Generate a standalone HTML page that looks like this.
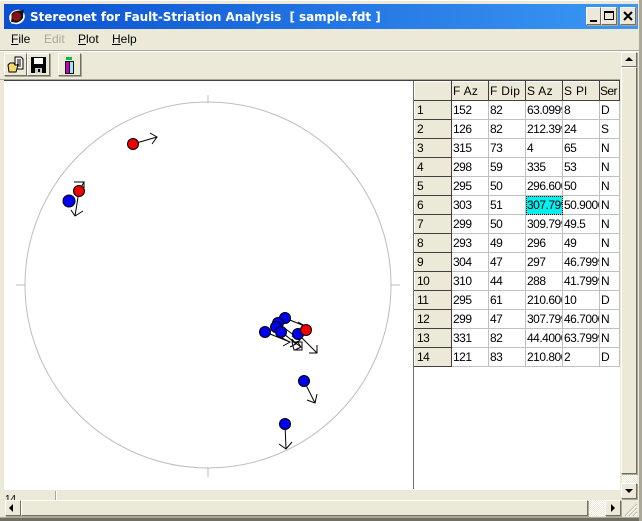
<!DOCTYPE html>
<html><head><meta charset="utf-8"><style>
html,body{margin:0;padding:0}
body{width:642px;height:521px;overflow:hidden;position:relative;background:#ece9d8;font-family:"Liberation Sans",sans-serif;font-size:12px;color:#000}
.a{position:absolute}
.btn{position:absolute;box-sizing:border-box;background:#ece9d8;border:1px solid;border-color:#fff #716f64 #716f64 #fff;box-shadow:1px 1px 0 #aca899}
.hatch{position:absolute;background:repeating-conic-gradient(#fff 0 25%,#ece9d8 0 50%) 0 0/2px 2px}
table{position:absolute;left:414px;top:81px;border-collapse:collapse;table-layout:fixed;width:205px;background:#fff}
td{box-sizing:border-box;height:19px;padding:0 0 0 1px;border:1px solid #c0c0c0;overflow:hidden;white-space:nowrap;font-size:12px;line-height:16px;letter-spacing:-.5px}
td.h{background:#ece9d8;border:1px solid;border-color:#fff #404040 #404040 #fff;padding-left:2px}
tr:first-child td{background:#ece9d8;border:1px solid;border-color:#fff #404040 #404040 #fff;letter-spacing:.3px}
tr:first-child td:last-child{letter-spacing:-.6px;padding-left:0}
td.s{background:#00f0f0;outline:1px dotted #000;outline-offset:-1px}
.m{position:absolute;top:32px;font-size:12px;line-height:15px}
.m u{text-decoration:underline}
</style></head><body>
<div class="a" style="left:0;top:0;width:642px;height:1px;background:#fff"></div>
<div class="a" style="left:4px;top:4px;width:634px;height:25px;background:linear-gradient(90deg,#0a50d0,#3a98f4)"></div>
<svg class="a" style="left:8px;top:8px" width="18" height="18" viewBox="0 0 18 18"><ellipse cx="9" cy="9" rx="8" ry="7" fill="#fff" transform="rotate(-25 9 9)"/><path d="M3 14Q4 10 3.500 6Q6 2 14 2.500L16 1.500Q15 6 15 10Q12 15 5 15Z" fill="#111"/><circle cx="8.500" cy="8.500" r="4.500" fill="#8b0f14"/><path d="M1 12Q3 15 8 14L4 16Z" fill="#fff"/></svg>
<div class="a" style="left:30px;top:9px;color:#fff;font:bold 12px/16px 'DejaVu Sans',sans-serif;letter-spacing:-.06px;white-space:pre">Stereonet for Fault-Striation Analysis  [ sample.fdt ]</div>
<div class="btn" style="left:586px;top:7px;width:15px;height:18px"><div class="a" style="left:3px;top:12px;width:7px;height:2px;background:#000"></div></div>
<div class="btn" style="left:601px;top:7px;width:16px;height:18px"><div class="a" style="left:2px;top:3px;width:10px;height:9px;box-sizing:border-box;border:1px solid #000;border-top-width:2px"></div></div>
<div class="btn" style="left:620px;top:7px;width:16px;height:18px"><svg class="a" style="left:2px;top:3px" width="11" height="11"><path d="M1 1L9 9M9 1L1 9" stroke="#000" stroke-width="2"/></svg></div>
<div class="m" style="left:11px"><u>F</u>ile</div>
<div class="m" style="left:44px;color:#aca899">Edit</div>
<div class="m" style="left:78px"><u>P</u>lot</div>
<div class="m" style="left:112px"><u>H</u>elp</div>
<div class="a" style="left:0;top:50px;width:642px;height:1px;background:#aca899"></div>
<div class="a" style="left:0;top:51px;width:642px;height:1px;background:#fff"></div>
<div class="btn" style="left:4px;top:53px;width:23px;height:23px"><svg class="a" style="left:2px;top:2px" width="18" height="18"><path d="M8 1H14L16 3V13H8Z" fill="#fff" stroke="#000"/><path d="M10 4H14M10 6H14M10 8H14M10 10H14" stroke="#000"/><path d="M1 9L3 7H7L8 9H11L9 16H2Z" fill="#f4d86a" stroke="#000"/></svg></div>
<div class="btn" style="left:27px;top:53px;width:23px;height:23px"><svg class="a" style="left:2px;top:2px" width="18" height="18"><path d="M1 1H16V17H1Z" fill="#000"/><rect x="4" y="2" width="9" height="6" fill="#fff"/><rect x="5" y="12" width="7" height="5" fill="#c8c8c8"/><rect x="8" y="13" width="2" height="3" fill="#000"/></svg></div>
<div class="btn" style="left:58px;top:53px;width:23px;height:23px"><svg class="a" style="left:2px;top:2px" width="18" height="18"><rect x="5" y="1" width="6" height="3" fill="#00c040"/><rect x="4" y="5" width="9" height="13" fill="#111"/><rect x="5" y="6" width="3" height="11" fill="#c000c0"/><rect x="9" y="6" width="3" height="11" fill="#9ee8f0"/></svg></div>
<div class="a" style="left:0;top:79px;width:620px;height:1px;background:#aca899"></div>
<div class="a" style="left:4px;top:80px;width:616px;height:1px;background:#404040"></div>
<div class="a" style="left:4px;top:81px;width:616px;height:409px;background:#fff"></div>
<div class="a" style="left:413px;top:81px;width:1px;height:408px;background:#716f64"></div>
<svg class="a" style="left:0;top:0" width="414" height="490" fill="none">
<circle cx="208" cy="285" r="183" stroke="#bdbdbd"/>
<path d="M208 95V103M208 468V477M16 285H25M391 285H400" stroke="#bdbdbd"/>
<g stroke="#000">
<path d="M133 144L157 137M150 133L157 137L152 144"/>
<path d="M79 191L84 182L74 182M84 182V188"/>
<path d="M79 191L75 216M71 210L75 216L83 211"/>
<path d="M285 318L307 327M278 323L300 340M276 327L296 344M281 332L301 347M265 332L290 342M298 334L317 353M317 345V353H309M298 322L307 327L300 332M292 336L300 340L294 345M290 347L296 344L292 339M295 350L301 347L297 341M282 338L290 342L283 346M292 342H302V350H294Z"/>
<path d="M304 381L315 403M307 400L315 403L317 394"/>
<path d="M285 424L286 449M279 444L286 449L292 442"/>
</g>
<g stroke="#000" fill="#0000f0">
<circle cx="69" cy="201" r="6"/><circle cx="285" cy="318" r="5.500"/><circle cx="278" cy="323" r="5.500"/><circle cx="276" cy="327" r="5.500"/><circle cx="281" cy="332" r="5.500"/><circle cx="265" cy="332" r="5.500"/><circle cx="298" cy="334" r="5.500"/><circle cx="304" cy="381" r="5.500"/><circle cx="285" cy="424" r="5.500"/>
</g>
<g stroke="#000" fill="#f00000">
<circle cx="133" cy="144" r="5.500"/><circle cx="79" cy="191" r="5.500"/><circle cx="306" cy="330" r="5.500"/>
</g>
</svg>
<table><colgroup><col style="width:37px"><col style="width:37px"><col style="width:37px"><col style="width:37px"><col style="width:37px"><col style="width:20px"></colgroup>
<tr><td></td><td>F Az</td><td>F Dip</td><td>S Az</td><td>S Pl</td><td>Ser</td></tr>
<tr><td class="h">1</td><td>152</td><td>82</td><td>63.09999</td><td>8</td><td>D</td></tr>
<tr><td class="h">2</td><td>126</td><td>82</td><td>212.3999</td><td>24</td><td>S</td></tr>
<tr><td class="h">3</td><td>315</td><td>73</td><td>4</td><td>65</td><td>N</td></tr>
<tr><td class="h">4</td><td>298</td><td>59</td><td>335</td><td>53</td><td>N</td></tr>
<tr><td class="h">5</td><td>295</td><td>50</td><td>296.6000</td><td>50</td><td>N</td></tr>
<tr><td class="h">6</td><td>303</td><td>51</td><td class="s">307.7999</td><td>50.90000</td><td>N</td></tr>
<tr><td class="h">7</td><td>299</td><td>50</td><td>309.7999</td><td>49.5</td><td>N</td></tr>
<tr><td class="h">8</td><td>293</td><td>49</td><td>296</td><td>49</td><td>N</td></tr>
<tr><td class="h">9</td><td>304</td><td>47</td><td>297</td><td>46.7999</td><td>N</td></tr>
<tr><td class="h">10</td><td>310</td><td>44</td><td>288</td><td>41.7999</td><td>N</td></tr>
<tr><td class="h">11</td><td>295</td><td>61</td><td>210.6000</td><td>10</td><td>D</td></tr>
<tr><td class="h">12</td><td>299</td><td>47</td><td>307.7999</td><td>46.7000</td><td>N</td></tr>
<tr><td class="h">13</td><td>331</td><td>82</td><td>44.4000</td><td>63.7999</td><td>N</td></tr>
<tr><td class="h">14</td><td>121</td><td>83</td><td>210.8000</td><td>2</td><td>D</td></tr>
</table>
<div class="a" style="left:4px;top:490px;width:616px;height:10px;background:#ece9d8;overflow:hidden"><div class="a" style="left:1px;top:4px;font-size:10px;line-height:12px">14</div><div class="a" style="left:51px;top:1px;width:1px;height:9px;background:#aca899"></div><div class="a" style="left:52px;top:1px;width:1px;height:9px;background:#fff"></div></div>
<div class="hatch" style="left:622px;top:67px;width:15px;height:416px"></div>
<div class="btn" style="left:621px;top:52px;width:16px;height:15px"><div class="a" style="left:3px;top:4px;border:4px solid transparent;border-top:0;border-bottom:4px solid #000"></div></div>
<div class="btn" style="left:621px;top:67px;width:16px;height:407px"></div>
<div class="btn" style="left:621px;top:483px;width:16px;height:16px"><div class="a" style="left:3px;top:5px;border:4px solid transparent;border-bottom:0;border-top:4px solid #000"></div></div>
<div class="hatch" style="left:21px;top:500px;width:585px;height:16px"></div>
<div class="btn" style="left:5px;top:500px;width:16px;height:16px"><div class="a" style="left:3px;top:3px;border:4px solid transparent;border-left:0;border-right:4px solid #000"></div></div>
<div class="btn" style="left:21px;top:500px;width:567px;height:16px"></div>
<div class="btn" style="left:605px;top:500px;width:16px;height:16px"><div class="a" style="left:5px;top:3px;border:4px solid transparent;border-right:0;border-left:4px solid #000"></div></div>
<svg class="a" style="left:624px;top:503px" width="14" height="14"><path d="M13 1L1 13M13 5L5 13M13 9L9 13" stroke="#aca899"/><path d="M13 2L2 13M13 6L6 13M13 10L10 13" stroke="#fff"/></svg>
<div class="a" style="left:0;top:517px;width:642px;height:1px;background:#aca899"></div>
<div class="a" style="left:0;top:518px;width:642px;height:3px;background:#716f64"></div>
<div class="a" style="left:639px;top:0;width:3px;height:521px;background:#aca899"></div>
</body></html>
